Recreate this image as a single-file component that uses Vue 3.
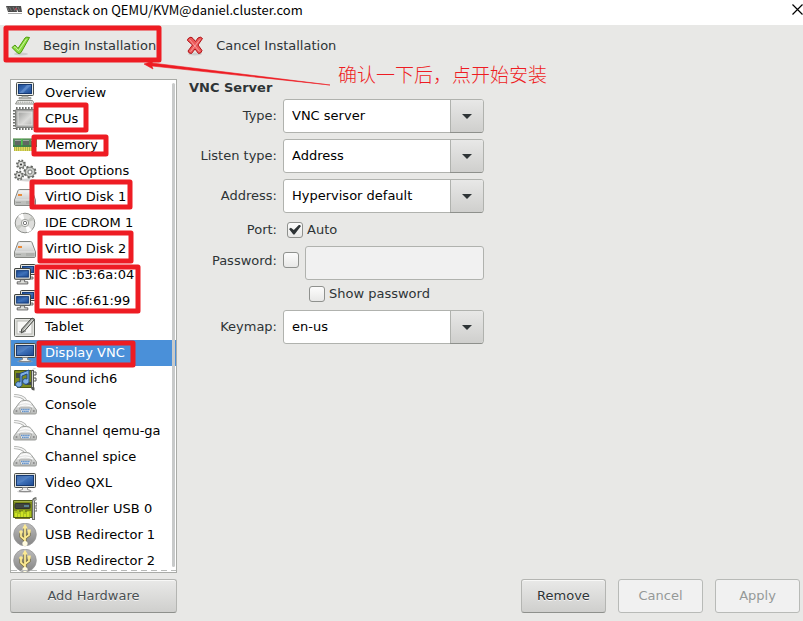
<script setup>
import { ref } from 'vue'

const devices = [
  { name: 'Overview', icon: 'computer' },
  { name: 'CPUs', icon: 'cpu' },
  { name: 'Memory', icon: 'memory' },
  { name: 'Boot Options', icon: 'gears' },
  { name: 'VirtIO Disk 1', icon: 'disk' },
  { name: 'IDE CDROM 1', icon: 'cdrom' },
  { name: 'VirtIO Disk 2', icon: 'disk' },
  { name: 'NIC :b3:6a:04', icon: 'network' },
  { name: 'NIC :6f:61:99', icon: 'network' },
  { name: 'Tablet', icon: 'tablet' },
  { name: 'Display VNC', icon: 'display' },
  { name: 'Sound ich6', icon: 'sound' },
  { name: 'Console', icon: 'serial' },
  { name: 'Channel qemu-ga', icon: 'serial' },
  { name: 'Channel spice', icon: 'serial' },
  { name: 'Video QXL', icon: 'display' },
  { name: 'Controller USB 0', icon: 'card' },
  { name: 'USB Redirector 1', icon: 'usb' },
  { name: 'USB Redirector 2', icon: 'usb' }
]
const selected = ref(10)
const autoPort = ref(true)
const usePassword = ref(false)
const showPassword = ref(false)
</script>

<template>
  <div class="window">
    <svg class="defs" aria-hidden="true">
      <defs>
        <linearGradient id="blue" x1="0" y1="0" x2="1" y2="1">
          <stop offset="0" stop-color="#1d4a92" />
          <stop offset=".5" stop-color="#3f72ba" />
          <stop offset="1" stop-color="#1d4a92" />
        </linearGradient>
        <linearGradient id="metal" x1="0" y1="0" x2="0" y2="1">
          <stop offset="0" stop-color="#f8f8f8" />
          <stop offset="1" stop-color="#b4b6b4" />
        </linearGradient>
        <linearGradient id="chip" x1="0" y1="0" x2="1" y2="1">
          <stop offset="0" stop-color="#a0a19f" />
          <stop offset=".6" stop-color="#dcdcda" />
          <stop offset="1" stop-color="#b4b4b2" />
        </linearGradient>
        <linearGradient id="ball" x1="0" y1="0" x2="0" y2="1">
          <stop offset="0" stop-color="#bcbcbc" />
          <stop offset="1" stop-color="#858585" />
        </linearGradient>
      </defs>

      <symbol id="computer" viewBox="0 0 24 24">
        <rect x="3.500" y="1.500" width="17" height="13" rx="1" fill="#eceeea" stroke="#4c504c" />
        <rect x="5.500" y="3.500" width="13" height="9" fill="url(#blue)" stroke="#173a72" />
        <path d="M7 11.500 14 4h4L10 12H6.500z" fill="#7ba4dc" opacity=".5" />
        <path d="M9 15h6v1.500h3v1.500H6v-1.500h3z" fill="#b9bbb7" stroke="#8c8f8a" stroke-width=".7" />
        <path d="M4.500 19.500h15l2 3.500h-19z" fill="#f2f2f0" stroke="#8a8d87" />
        <path d="M4.500 21.200h15" stroke="#999d97" stroke-dasharray="1.500 .7" />
      </symbol>

      <symbol id="cpu" viewBox="0 0 24 24">
        <path d="M3 1.500h19M3 21.500h19" stroke="#6d6f6c" stroke-width="3" stroke-dasharray="1.600 1.400" />
        <path d="M1.500 3v19M22.500 3v19" stroke="#6d6f6c" stroke-width="3" stroke-dasharray="1.600 1.400" />
        <rect x="2.500" y="2.500" width="19" height="18" rx="1" fill="#a4a5a3" stroke="#7b7d7a" />
        <rect x="5" y="5" width="14" height="13" fill="url(#chip)" stroke="#e3e3e1" />
      </symbol>

      <symbol id="memory" viewBox="0 0 24 24">
        <rect x="0" y="5" width="24" height="9" fill="#57915f" />
        <path d="M0 5.500h24" stroke="#9dbf96" />
        <path d="M2 7h6v5H2zM10 7h6v5h-6zM18 7h5v5h-5z" fill="#606762" />
        <path d="M2 7.500h6M10 7.500h6M18 7.500h5" stroke="#a2a7a2" />
        <path d="M8.800 6v8" stroke="#44dd44" />
        <path d="M0 13h24" stroke="#2c6b39" />
        <rect x="1" y="14" width="22" height="4" fill="#e4dc60" />
        <path d="M1 16h22" stroke="#8f9c35" stroke-width="4" stroke-dasharray=".6 1.600" />
      </symbol>

      <symbol id="gears" viewBox="0 0 24 24">
        <ellipse cx="14" cy="21" rx="9" ry="1.500" fill="#d4d4d4" />
        <g fill="#e0e1de" stroke="#626561">
          <circle cx="8" cy="5.500" r="4" stroke-width="2" stroke-dasharray="1.600 1.540" />
          <circle cx="8" cy="5.500" r="3.200" stroke-width=".8" />
          <circle cx="6" cy="16.500" r="4" stroke-width="2" stroke-dasharray="1.600 1.540" />
          <circle cx="6" cy="16.500" r="3.200" stroke-width=".8" />
          <circle cx="17" cy="13" r="5.500" stroke-width="2" stroke-dasharray="2.100 2.220" />
          <circle cx="17" cy="13" r="4.800" fill="#c9cbc7" stroke-width=".8" />
          <circle cx="17" cy="13" r="2" fill="#fff" stroke-width=".8" />
        </g>
        <circle cx="8" cy="5.500" r="1" fill="#333" />
        <circle cx="6" cy="16.500" r="1" fill="#333" />
      </symbol>

      <symbol id="disk" viewBox="0 0 24 24">
        <path d="M5 5.500Q5.300 4.500 6.500 4.500h11Q18.700 4.500 19 5.500L22.500 15v4q0 1.500-1.500 1.500H3q-1.500 0-1.500-1.500v-4z" fill="#e8e8e8" stroke="#858783" />
        <path d="M6 6h12l3 8.500H3z" fill="url(#metal)" opacity=".5" />
        <path d="M2 15.500h20v3q0 1.500-1.500 1.500h-17Q2 20 2 18.500z" fill="#bdbfbc" />
        <path d="M3 17.500h5M14 16v3M16 16v3M18 16v3M20 16v3" stroke="#a0a29f" />
        <rect x="5" y="9" width="4" height="2" fill="#e88b3b" />
      </symbol>

      <symbol id="cdrom" viewBox="0 0 24 24">
        <circle cx="12" cy="12" r="9.800" fill="#dededc" stroke="#8d8f8b" />
        <path d="M12 12 5 5a10 10 0 0 1 5-2.500zM12 12l7 7a10 10 0 0 1-5 2.500z" fill="#fff" />
        <path d="M12 12 19 5a10 10 0 0 1 2 4zM12 12 5 19a10 10 0 0 1-2-4z" fill="#c6c8c3" />
        <circle cx="12" cy="12" r="3.700" fill="#f3f3f1" stroke="#a2a4a0" />
        <circle cx="12" cy="12" r="1.700" fill="#fff" stroke="#777" />
      </symbol>

      <symbol id="pc" viewBox="0 0 16 16">
        <rect x=".5" y=".5" width="15" height="10" rx="1" fill="#e3e5e1" stroke="#3f423e" />
        <rect x="2.500" y="2.500" width="11" height="6" fill="url(#blue)" stroke="#173f7e" />
        <path d="M6 11h4v2h3v2H3v-2h3z" fill="#dcddd9" stroke="#555" stroke-width=".8" />
      </symbol>
      <symbol id="network" viewBox="0 0 24 24">
        <use href="#pc" x="7" y="1" width="16" height="16" />
        <use href="#pc" x="1" y="5" width="17" height="17" />
      </symbol>

      <symbol id="tablet" viewBox="0 0 24 24">
        <rect x="1.500" y="3.500" width="20" height="18" rx="1" fill="#e2e3df" stroke="#60635e" />
        <rect x="4" y="6" width="15" height="13" fill="#f8f8f6" stroke="#b5b7b2" />
        <path d="M6 17q2-1 3 0t4-1" fill="none" stroke="#888" />
        <path d="m19 3 2.500 1.500L11.500 16 8 18l.8-4z" fill="#a9aba6" stroke="#454843" />
        <path d="m19.500 5-8.500 10" stroke="#e5e7e3" />
      </symbol>

      <symbol id="display" viewBox="0 0 24 24">
        <ellipse cx="12" cy="20.500" rx="8" ry="1.500" fill="#aaa" opacity=".5" />
        <rect x="1.500" y="2.500" width="21" height="14" rx="1" fill="#dfe1dd" stroke="#484b47" />
        <rect x="3.500" y="4.500" width="17" height="10" fill="url(#blue)" stroke="#173a72" />
        <path d="M4 13V5h15Q14 7 12 9t-8 4z" fill="#7da5dc" opacity=".35" />
        <path d="M9.500 16.500h5v2l3 1v1h-11v-1l3-1z" fill="#eee" stroke="#777" stroke-width=".8" />
      </symbol>

      <symbol id="sound" viewBox="0 0 24 24">
        <path d="M1.500 3.500h18v17h-15v-2h-3z" fill="#7d8c1e" stroke="#4d5915" />
        <path d="M3 6h5v5H3zM12 15h6v3h-6z" fill="#3f4a45" />
        <path d="M19.500 3v17q0 2 2 2" fill="none" stroke="#555753" stroke-width="3" />
        <path d="M19.500 4v16M19.500 3q0-1.500 3-1.500" fill="none" stroke="#d3d5cf" />
        <path d="M21 5h2v3h-2M21 11h2v3h-2" fill="none" stroke="#555" />
        <path d="M7 6.500 16 3v11.500a3.200 2.700 0 1 1-2-2.500V7L9 9v8.500a3.200 2.700 0 1 1-2-2.500z" fill="#7fb0e6" stroke="#204a87" />
      </symbol>

      <symbol id="serial" viewBox="0 0 24 24">
        <path d="M1 2.500C6 3 11 3.500 13 8" fill="none" stroke="#a9aba8" stroke-width="3" />
        <path d="M1 2.500C6 3 11 3.500 13 8" fill="none" stroke="#f4f4f4" stroke-width="1.400" />
        <path d="M1 17 6.500 9.500Q8 7.500 11 7.500h2.500q3 0 4.500 2L23.500 17v2.500q0 1.500-1.500 1.500H2q-1.500 0-1.500-1.500z" fill="url(#metal)" stroke="#9c9e9b" />
        <path d="M7 10.500q5.500-2.500 11 0M4.500 14q7.500-4 15.500 0" fill="none" stroke="#fff" />
        <path d="M6.500 15h12l-1.500 5H8z" fill="#ececec" stroke="#a1a3a0" stroke-linejoin="round" />
        <path d="M8 16.500h9M9 18.500h7" stroke="#5e90cb" stroke-width="1.400" stroke-dasharray="1.600 .5" />
        <circle cx="3.500" cy="18" r="1" fill="#8a8a8a" />
        <circle cx="20.800" cy="18" r="1" fill="#8a8a8a" />
      </symbol>

      <symbol id="card" viewBox="0 0 24 24">
        <path d="M.5 3.500h19v17H.5z" fill="#7c8a1a" stroke="#4e5b16" />
        <path d="M1 4.500h18" stroke="#a3b042" />
        <rect x="2" y="6.500" width="15" height="5" rx="1" fill="#414640" stroke="#30342f" />
        <rect x="11" y="8" width="5" height="2" fill="#5b8290" />
        <path d="M1 14h3v-1h2v2h2v-1h2v-1h2v2h2v-1h4v6H1z" fill="#a9c21c" />
        <path d="M3 20v-4M6 20v-3M9 20v-5M12 20v-3M15 20v-5" stroke="#dcee28" stroke-width="1.500" />
        <path d="M2 21.500h15" stroke="#7f7a35" />
        <path d="M20.500 23V4q0-2 3-2.500" fill="none" stroke="#6c6e6a" stroke-width="3" />
        <path d="M20.500 22V4q0-1.500 3-2" fill="none" stroke="#c9cbc6" />
        <path d="M22 6h2v3h-2M22 11h2v3h-2" fill="none" stroke="#666" />
      </symbol>

      <symbol id="usb" viewBox="0 0 24 24">
        <circle cx="12" cy="11.500" r="11.300" fill="url(#ball)" stroke="#979797" stroke-width=".8" />
        <g fill="none" stroke="#6f6531" stroke-width="3">
          <path d="M12 20V4M12 17l-4-3.500V9M12 15l4-3V8" />
        </g>
        <g fill="none" stroke="#fbe993" stroke-width="1.800">
          <path d="M12 20V4M12 17l-4-3.500V9M12 15l4-3V8" />
        </g>
        <path d="m12 .8-2.800 4.700h5.600z" fill="#fbe993" />
        <circle cx="8" cy="9" r="1.800" fill="#fbe993" />
        <path d="M14.500 6.500h3.200v3.200h-3.200z" fill="#fbe993" />
        <circle cx="12" cy="20.500" r="2.600" fill="#fffbe0" />
      </symbol>
    </svg>

    <header class="titlebar">
      <svg class="app-icon" viewBox="0 0 16 10" aria-hidden="true">
        <path d="M0 1h5l2 6H2zM5 1h5l1 6H7zM10 1h5l1 6h-4z" fill="#4b4b4b" />
        <path d="m1 2 2 4M3.500 2l2 4M7 2l2 4M12 2l2 4" stroke="#999" stroke-width=".6" />
        <path d="M2 8.500h14" stroke="#aaa" />
        <path d="M9 3h2v2H9z" fill="#a44b58" />
      </svg>
      <h1>openstack on QEMU/KVM@daniel.cluster.com</h1>
      <button class="close" type="button" aria-label="Close">
        <svg viewBox="0 0 11 11"><path d="m.5.5 10 10m0-10-10 10" stroke="#000" stroke-width="1.200" /></svg>
      </button>
    </header>

    <nav class="toolbar">
      <button type="button">
        <svg class="tool-icon" viewBox="0 0 20 20" aria-hidden="true">
          <ellipse cx="10" cy="18" rx="7" ry="1.500" fill="#bbb" opacity=".6" />
          <path d="m1 11.500 3-2.500 3 3.500L14 2q1-1.500 4.500-.5L10 16.500q-1.500 2-3.500.5z" fill="#8bdc3f" stroke="#4b9a0b" stroke-linejoin="round" />
          <path d="m3 11.500 1-.8 3.500 4L15.500 3" fill="none" stroke="#c9f49d" />
        </svg>
        <span>Begin Installation</span>
      </button>
      <button type="button">
        <svg class="tool-icon" viewBox="0 0 20 20" aria-hidden="true">
          <ellipse cx="11" cy="18" rx="7" ry="1.500" fill="#bbb" opacity=".6" />
          <path d="M5 2q2-2 4 .5l2.500 3L14 2q2.500-2 4.500.5L14 9l4 5.500q-.5 3-3.500 3L11 13l-3.500 4.500q-3 0-3.500-2.500L8.500 9 3.500 4.500Q3.500 2.500 5 2z" fill="#ed5a5a" stroke="#b01217" stroke-linejoin="round" />
          <path d="m5.500 3.500 10 12M16 3.500 6.500 15.500" stroke="#f69b9b" />
        </svg>
        <span>Cancel Installation</span>
      </button>
    </nav>

    <main class="content">
      <aside class="sidebar">
        <div class="list-frame">
          <ul class="devices">
            <li v-for="(device, i) in devices" :key="device.name">
              <button type="button" class="device" :class="{ active: i === selected }" @click="selected = i">
                <svg class="device-icon" aria-hidden="true"><use :href="'#' + device.icon" /></svg>
                <span>{{ device.name }}</span>
              </button>
            </li>
          </ul>
        </div>
        <button type="button" class="btn add">Add Hardware</button>
      </aside>

      <section class="details">
        <h2>VNC Server</h2>
        <form class="form" @submit.prevent>
          <label for="type">Type:</label>
          <div class="combo">
            <select id="type"><option>VNC server</option><option>Spice server</option></select>
            <span class="arrow"></span>
          </div>
          <label for="listen">Listen type:</label>
          <div class="combo">
            <select id="listen"><option>Address</option><option>None</option></select>
            <span class="arrow"></span>
          </div>
          <label for="address">Address:</label>
          <div class="combo">
            <select id="address"><option>Hypervisor default</option><option>All interfaces</option></select>
            <span class="arrow"></span>
          </div>
          <label for="port">Port:</label>
          <label class="check port"><input id="port" v-model="autoPort" type="checkbox" />Auto</label>
          <label class="password-label" for="password">Password:</label>
          <div class="password">
            <input v-model="usePassword" class="toggle" type="checkbox" aria-label="Use password" />
            <input id="password" class="entry" :type="showPassword ? 'text' : 'password'" :disabled="!usePassword" />
            <label class="check show"><input v-model="showPassword" type="checkbox" />Show password</label>
          </div>
          <label for="keymap">Keymap:</label>
          <div class="combo">
            <select id="keymap"><option>en-us</option><option>de</option></select>
            <span class="arrow"></span>
          </div>
        </form>
        <footer class="actions">
          <button type="button" class="btn">Remove</button>
          <button type="button" class="btn" disabled>Cancel</button>
          <button type="button" class="btn" disabled>Apply</button>
        </footer>
      </section>
    </main>

    <svg class="marks" width="560" height="380" aria-hidden="true">
      <g fill="none" stroke="#ee1c23" stroke-width="5" stroke-linejoin="round">
        <rect x="6" y="28" width="153" height="32" />
        <rect x="36" y="105" width="50" height="25" />
        <rect x="34" y="137" width="72" height="17" />
        <rect x="32" y="182" width="98" height="25" />
        <rect x="40" y="233" width="91" height="28" />
        <rect x="37" y="267" width="101" height="44" />
        <rect x="39" y="343" width="94" height="22" />
      </g>
      <path d="m144 64 9-3-1 2 178 22-178-19 1 3z" fill="#ee1c23" stroke="#ee1c23" stroke-width=".6" />
    </svg>
    <p class="note">确认一下后，点开始安装</p>
  </div>
</template>

<style>
body {
  margin: 0;
}
</style>

<style scoped>
* {
  box-sizing: border-box;
}
.window {
  position: relative;
  display: flex;
  flex-direction: column;
  height: 100vh;
  min-height: 420px;
  overflow: hidden;
  background: #e8e8e6;
  color: #2e3436;
  font: 13px/18px "DejaVu Sans", sans-serif;
}
button,
input,
select {
  margin: 0;
  font: inherit;
  color: inherit;
}
.defs {
  position: absolute;
  width: 0;
  height: 0;
}
.titlebar {
  display: flex;
  align-items: center;
  flex: none;
  height: 25px;
  padding: 0 0 6px 6px;
  background: #fff;
  color: #000;
}
.app-icon {
  width: 16px;
  height: 10px;
}
h1 {
  flex: 1;
  margin: 0 0 0 5px;
  font: 13px/18px "Noto Sans CJK SC", "Open Sans", sans-serif;
}
.close {
  display: flex;
  padding: 0;
  border: 0;
  background: none;
}
.close svg {
  width: 11px;
  height: 11px;
}
.toolbar {
  display: flex;
  gap: 28px;
  flex: none;
  height: 54px;
  padding: 11px 11px 0;
}
.toolbar button {
  display: flex;
  align-items: center;
  gap: 12px;
  height: 20px;
  padding: 0;
  border: 0;
  background: none;
}
.tool-icon {
  width: 20px;
  height: 20px;
}
.content {
  display: flex;
  gap: 12px;
  flex: 1;
  min-height: 0;
  padding: 0 3px 8px 10px;
}
.sidebar {
  display: flex;
  flex-direction: column;
  gap: 6px;
  flex: none;
  width: 167px;
}
.list-frame {
  position: relative;
  display: flex;
  flex: 1;
  min-height: 0;
  border: 1px solid #a9aba7;
  background: #fff;
}
.list-frame::before {
  content: "";
  position: absolute;
  inset: auto 0 1px 0;
  height: 1px;
  background: repeating-linear-gradient(90deg, #b8bab8 0 6px, transparent 6px 10px);
}
.list-frame::after {
  content: "";
  position: absolute;
  inset: 3px 1px 5px auto;
  width: 3px;
  border-radius: 2px;
  background: #c8caca;
}
.devices {
  flex: 1;
  margin: 0;
  padding: 0;
  overflow-y: auto;
  scrollbar-width: none;
  list-style: none;
}
.device {
  display: flex;
  align-items: center;
  gap: 8px;
  width: 100%;
  height: 26px;
  padding: 0 2px;
  border: 0;
  background: none;
  color: #000;
  text-align: left;
  white-space: nowrap;
}
.device.active {
  background: #4a90d9;
  color: #fff;
}
.device-icon {
  flex: none;
  width: 24px;
  height: 24px;
}
.btn {
  height: 34px;
  border: 1px solid #b4b5b2;
  border-bottom-color: #8e908c;
  border-radius: 3px;
  background: linear-gradient(#e9e9e8, #cfcfcd);
  box-shadow: inset 0 1px #f8f8f7;
  text-shadow: 0 1px #f4f4f4;
}
.btn.add {
  color: #4a5053;
}
.btn:disabled {
  border-color: #b8bab7;
  background: #f1f1f1;
  box-shadow: none;
  color: #959998;
}
.details {
  display: flex;
  flex-direction: column;
  flex: 1;
}
h2 {
  margin: 0 0 2px;
  font-size: 13px;
  line-height: 18px;
}
.form {
  display: grid;
  grid-template-columns: 88px 201px;
  gap: 6px;
  align-items: center;
}
.form > label:not(.check) {
  text-align: right;
}
.combo {
  display: grid;
  grid-template-columns: 1fr 33px;
  height: 34px;
  border: 1px solid #b0b2ae;
  border-radius: 3px;
  background: #fff;
}
.combo select {
  grid-area: 1 / 1 / 2 / 3;
  appearance: none;
  padding: 0 36px 0 8px;
  border: 0;
  border-radius: 3px;
  background: none;
  color: #000;
}
.arrow {
  grid-area: 1 / 2;
  display: grid;
  place-items: center;
  border-left: 1px solid #b0b2ae;
  border-radius: 0 2px 2px 0;
  background: linear-gradient(#e8e8e7, #cfcfcd);
  box-shadow: 0 1px #8e908c;
  pointer-events: none;
}
.arrow::before {
  content: "";
  border: 5px solid transparent;
  border-top-color: #2e3436;
  border-bottom: 0;
}
.check {
  display: flex;
  align-items: center;
  gap: 4px;
}
.port {
  height: 21px;
  padding-left: 4px;
}
input[type="checkbox"] {
  display: grid;
  place-items: center;
  flex: none;
  width: 16px;
  height: 16px;
  appearance: none;
  border: 1px solid #8f918e;
  border-radius: 3px;
  background: linear-gradient(#fcfcfc, #e8e8e7);
}
input[type="checkbox"]:checked::before {
  content: "";
  width: 12px;
  height: 10px;
  background: #2e3436;
  clip-path: polygon(0 45%, 16% 32%, 40% 54%, 86% 0, 100% 14%, 46% 100%, 36% 100%);
}
.password-label {
  align-self: start;
  line-height: 30px;
}
.password {
  display: grid;
  grid-template-columns: 16px 1fr;
  grid-template-rows: 34px 24px;
  column-gap: 6px;
}
.toggle {
  margin-top: 6px;
}
.entry {
  width: 100%;
  padding: 0 8px;
  border: 1px solid #b0b2ae;
  border-radius: 3px;
  background: #fff;
}
.entry:disabled {
  background: #f1f1f1;
}
.show {
  grid-column: 2;
  padding: 3px 0 0 4px;
}
.actions {
  display: flex;
  justify-content: flex-end;
  gap: 12px;
  margin-top: auto;
}
.actions .btn {
  width: 85px;
}
.marks {
  position: absolute;
  top: 0;
  left: 0;
  pointer-events: none;
}
.note {
  position: absolute;
  top: 61px;
  left: 338px;
  margin: 0;
  color: #ee1c23;
  font: 300 19px/26px "Noto Sans CJK SC", sans-serif;
  white-space: nowrap;
  pointer-events: none;
}
</style>
